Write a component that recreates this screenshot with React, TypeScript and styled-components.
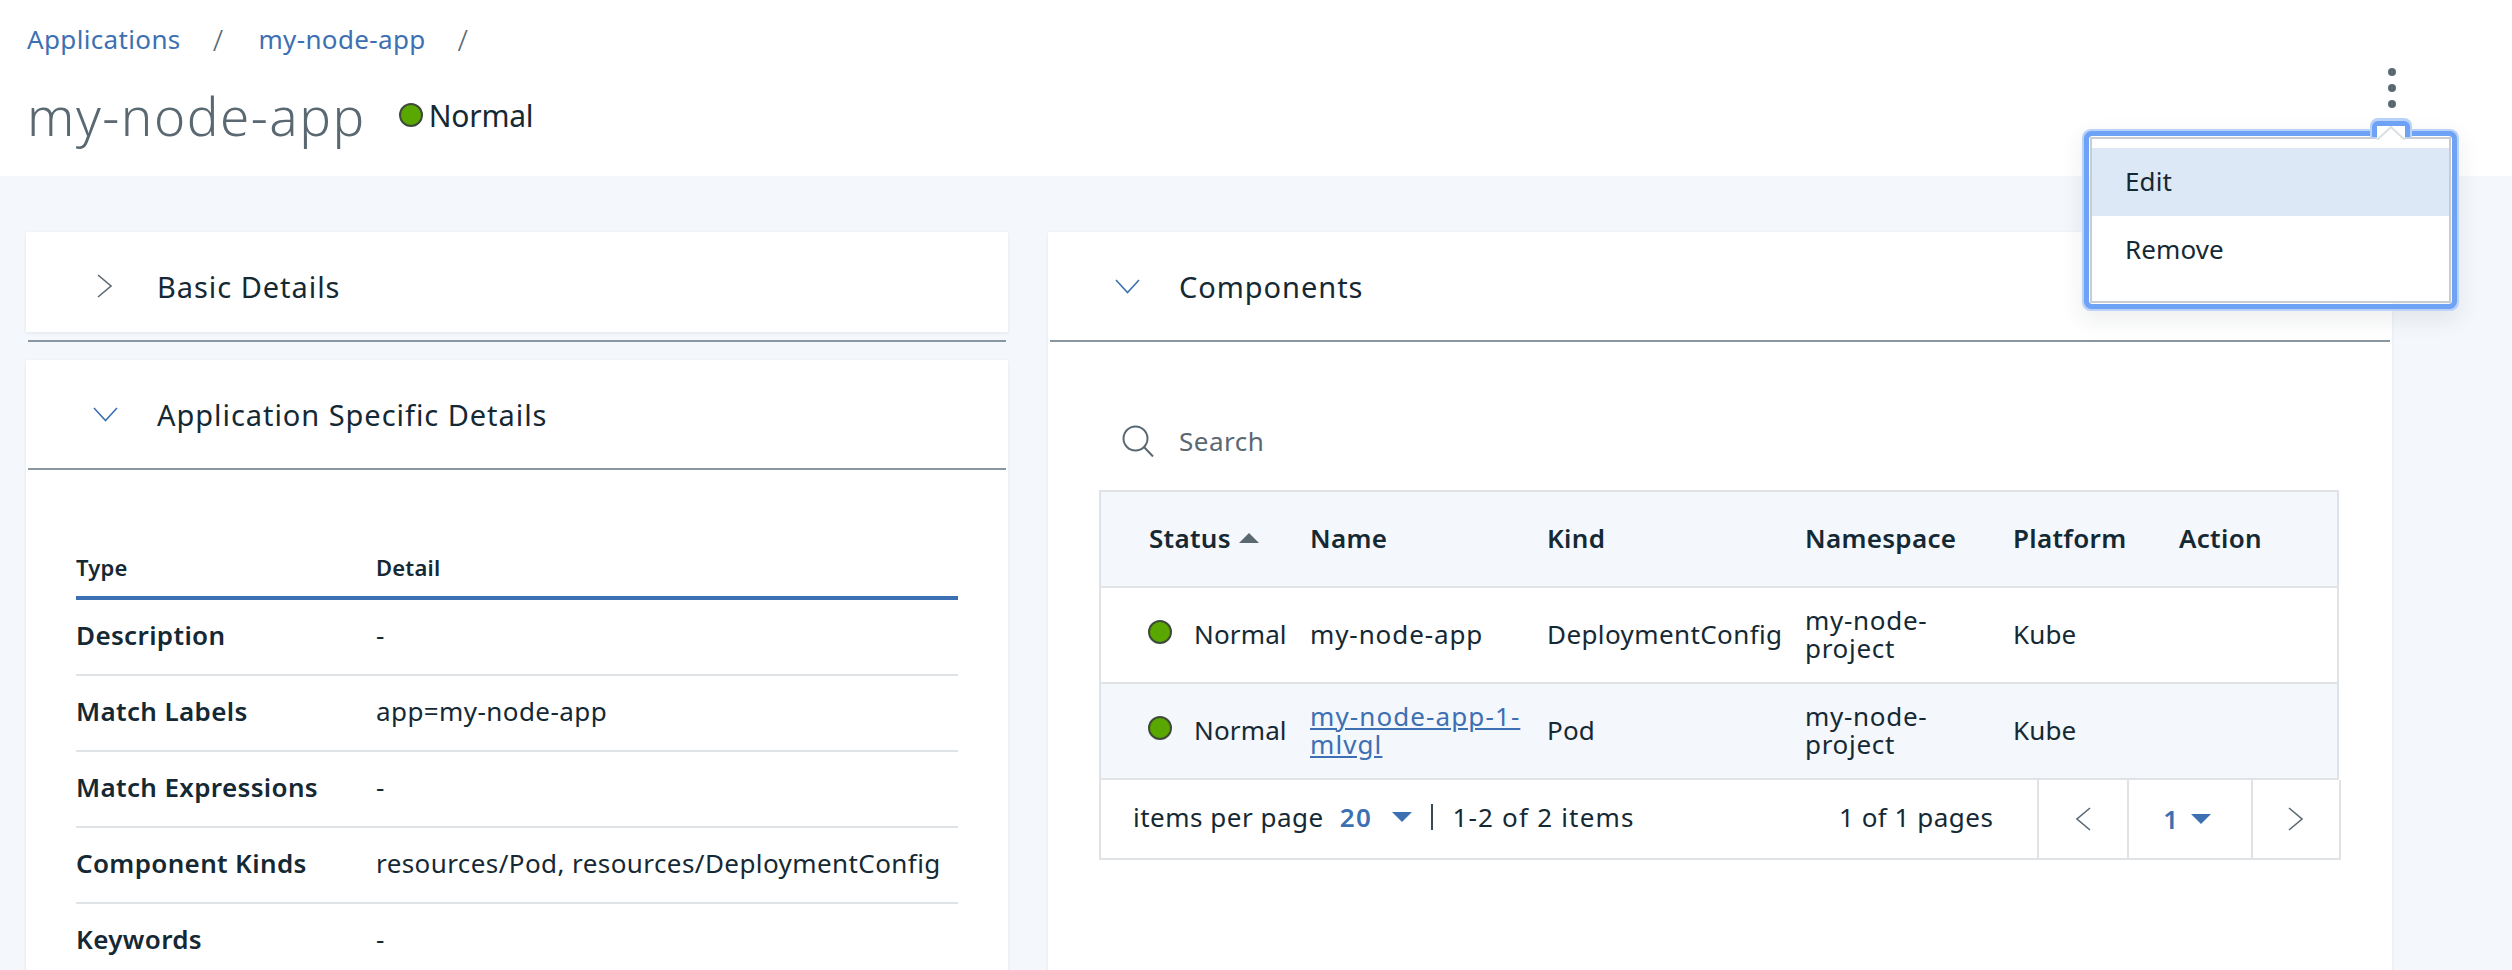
import React from "react";
import styled, { createGlobalStyle } from "styled-components";

const Global = createGlobalStyle`
  html, body { margin: 0; padding: 0; background: #f4f7fb; height: 970px; overflow: hidden; }
  body { font-family: "Noto Sans", "Open Sans", sans-serif; color: #152934; }
  * { box-sizing: border-box; }
`;

const Page = styled.div`
  position: relative;
  width: 2512px;
  height: 970px;
  overflow: hidden;
`;
const TopBar = styled.header`
  height: 176px;
  background: #fff;
  padding: 20px 28px 0 27px;
`;
const Crumbs = styled.nav`
  display: flex;
  align-items: center;
  height: 38px;
  font-size: 26px;
  letter-spacing: 0.35px;
`;
const CrumbLink = styled.a`
  color: #3d70b2;
`;
const Slash = styled.span`
  color: #5a6872;
  font-size: 30px;
  font-weight: 300;
  margin: 0 35px 0 32px;
`;
const TitleRow = styled.div`
  display: flex;
  align-items: center;
  margin-top: 15px;
  height: 84px;
`;
const Title = styled.h1`
  margin: 0 33px 0 0;
  font-size: 53px;
  font-weight: 300;
  color: #5a6872;
  letter-spacing: 1.5px;
`;
const Dot = styled.span`
  display: inline-block;
  flex: none;
  width: 24px;
  height: 24px;
  border-radius: 50%;
  background: #5aa700;
  border: 2px solid #3e4b3a;
`;
const TitleStatus = styled.span`
  font-size: 30px;
  margin-left: 6px;
  letter-spacing: -0.2px;
`;
const KebabButton = styled.div`
  position: absolute;
  left: 2388px;
  top: 68px;
  display: flex;
  flex-direction: column;
  gap: 8px;
`;
const KebabDot = styled.span`
  width: 8px;
  height: 8px;
  border-radius: 50%;
  background: #5a6872;
`;
const Main = styled.main`
  display: flex;
  align-items: flex-start;
  gap: 40px;
  padding: 56px 0 0 26px;
`;
const LeftColumn = styled.div`
  width: 982px;
  display: flex;
  flex-direction: column;
`;
const RightColumn = styled.section`
  width: 1344px;
  height: 760px;
  background: #fff;
  box-shadow: 0 1px 3px rgba(21, 41, 52, 0.08);
`;
const Card = styled.section`
  background: #fff;
  box-shadow: 0 1px 3px rgba(21, 41, 52, 0.08);
`;
const PanelHead = styled.div<{ $h: number; $nudge?: number }>`
  display: flex;
  align-items: center;
  gap: 39px;
  height: ${(p) => p.$h}px;
  padding-left: 66px;
  padding-top: ${(p) => p.$nudge ?? 0}px;
`;
const PanelTitle = styled.h2`
  margin: 0;
  font-size: 29px;
  font-weight: 400;
  letter-spacing: 0.95px;
`;
const IconSlot = styled.span`
  display: flex;
  justify-content: center;
  width: 26px;
`;
const Rule = styled.div`
  height: 2px;
  margin: 0 2px;
  background: #8897a2;
`;
const CollapsedGap = styled.div`
  height: 8px;
`;
const Spacer = styled.div`
  height: 18px;
`;
const DetailBody = styled.div`
  padding: 76px 50px 0;
`;
const DetailHead = styled.div`
  display: grid;
  grid-template-columns: 300px 1fr;
  align-items: center;
  height: 54px;
  padding-bottom: 8px;
  font-size: 22px;
  font-weight: 600;
  letter-spacing: 0.2px;
  border-bottom: 4px solid #3d70b2;
`;
const DetailRow = styled.div`
  display: grid;
  grid-template-columns: 300px 1fr;
  align-items: center;
  height: 76px;
  padding-bottom: 4px;
  font-size: 26px;
  letter-spacing: 0.42px;
  border-bottom: 2px solid #dfe3e6;
`;
const DetailKey = styled.span`
  font-weight: 600;
  letter-spacing: 0.35px;
`;
const SearchBar = styled.div`
  display: flex;
  align-items: center;
  height: 32px;
  margin: 83px 0 33px 74px;
  font-size: 26px;
  color: #5a6872;
  letter-spacing: 0.5px;
  gap: 25px;
`;
const TableWrap = styled.div`
  width: 1240px;
  margin-left: 51px;
  border: 2px solid #dfe3e6;
  border-right: none;
  border-bottom: none;
  position: relative;
`;
const GridRow = styled.div<{ $shade?: boolean; $h: number; $head?: boolean }>`
  display: grid;
  grid-template-columns: 185px 237px 258px 208px 166px 180px;
  align-items: center;
  width: 1238px;
  height: ${(p) => p.$h}px;
  padding-bottom: 3px;
  background: ${(p) => (p.$shade ? "#f4f7fb" : "#fff")};
  border-bottom: 2px solid #dfe3e6;
  border-right: 2px solid #dfe3e6;
  font-size: 26px;
  font-weight: ${(p) => (p.$head ? 600 : 400)};
  letter-spacing: ${(p) => (p.$head ? 0.3 : 0.15)}px;
  line-height: 28px;
`;
const Cell = styled.div`
  padding-left: 24px;
`;
const Spread = styled.span<{ $ls: number }>`
  letter-spacing: ${(p) => p.$ls}px;
`;
const StatusCell = styled.div`
  display: flex;
  align-items: center;
  padding-left: 47px;
  gap: 22px;
  white-space: nowrap;
`;
const RaisedDot = styled(Dot)`
  position: relative;
  top: -2px;
`;
const SortCell = styled.div`
  display: flex;
  align-items: center;
  padding-left: 48px;
  gap: 8px;
`;
const NameLink = styled.a`
  color: #3d70b2;
  text-decoration: underline;
  letter-spacing: 1.1px;
`;
const Footer = styled.div`
  display: flex;
  align-items: center;
  height: 80px;
  width: 1240px;
  background: #fff;
  border-bottom: 2px solid #dfe3e6;
  font-size: 26px;
  letter-spacing: 0.5px;
`;
const FooterLeft = styled.div`
  display: flex;
  align-items: center;
  padding: 0 0 4px 32px;
  width: 738px;
`;
const BluePick = styled.span`
  color: #3d70b2;
  font-weight: 600;
`;
const PerPagePick = styled(BluePick)`
  margin: 0 20px 0 16px;
  letter-spacing: 1.5px;
`;
const Sep = styled.span`
  margin: 0 19px 0 19px;
  width: 2px;
  height: 26px;
  background: #3a4a54;
`;
const PagesLabel = styled.div`
  width: 198px;
  padding-bottom: 4px;
`;
const PageBox = styled.div<{ $w: number; $shift?: number }>`
  display: flex;
  align-items: center;
  justify-content: center;
  gap: 12px;
  width: ${(p) => p.$w}px;
  height: 78px;
  padding-right: ${(p) => p.$shift ?? 0}px;
  border-left: 2px solid #dfe3e6;
  &:last-child { border-right: 2px solid #dfe3e6; }
`;
const Popup = styled.div`
  position: absolute;
  left: 2092px;
  top: 139px;
  width: 357px;
  height: 162px;
  background: #fff;
  padding-top: 9px;
  font-size: 26px;
  box-shadow: 0 0 0 2px #c9cdd1;
  &::before {
    content: "";
    position: absolute;
    inset: -3px;
    border-radius: 3px;
    box-shadow: 0 0 0 5px #6ea2f5, 0 0 0 7px #b9d2fa, 0 8px 22px 8px rgba(21, 41, 52, 0.08);
    pointer-events: none;
  }
`;
const Notch = styled.div`
  position: absolute;
  left: 280px;
  top: -18px;
  width: 38px;
  height: 16px;
  background: #fff;
  border: 5px solid #6ea2f5;
  border-bottom: none;
  border-radius: 6px 6px 0 0;
  box-shadow: 0 -1px 0 2px #b9d2fa;
`;
const NotchArrow = styled.svg`
  position: absolute;
  left: 0;
  top: 0;
  background: #fff;
`;
const MenuItem = styled.div<{ $active?: boolean }>`
  display: flex;
  align-items: center;
  height: 68px;
  padding: 0 0 2px 33px;
  letter-spacing: 0.1px;
  background: ${(p) => (p.$active ? "#dde8f6" : "transparent")};
`;
const Tri = styled.svg`
  display: block;
  flex: none;
`;

const ChevronRight = () => (
  <svg width="16" height="24" viewBox="0 0 16 24" fill="none">
    <path d="M1 1l13 11L1 23" stroke="#5a6872" strokeWidth="1.6" />
  </svg>
);
const ChevronLeft = () => (
  <svg width="16" height="24" viewBox="0 0 16 24" fill="none">
    <path d="M15 1L2 12l13 11" stroke="#5a6872" strokeWidth="1.6" />
  </svg>
);
const ChevronDown = () => (
  <svg width="25" height="15" viewBox="0 0 25 15" fill="none">
    <path d="M1 1l11.5 12.5L24 1" stroke="#3d70b2" strokeWidth="1.6" />
  </svg>
);
const SearchIcon = () => (
  <svg width="32" height="32" viewBox="0 0 32 32" fill="none">
    <circle cx="13.5" cy="13.5" r="12" stroke="#5a6872" strokeWidth="2" />
    <path d="M22 22l9 9.5" stroke="#5a6872" strokeWidth="2" />
  </svg>
);
const Caret = ({ up, color }: { up?: boolean; color: string }) => (
  <Tri width="20" height="10" viewBox="0 0 20 10">
    <path d={up ? "M10 0l10 10H0z" : "M0 0h20L10 10z"} fill={color} />
  </Tri>
);

const details: [string, string][] = [
  ["Description", "-"],
  ["Match Labels", "app=my-node-app"],
  ["Match Expressions", "-"],
  ["Component Kinds", "resources/Pod, resources/DeploymentConfig"],
  ["Keywords", "-"],
];

export default function App() {
  return (
    <Page>
      <Global />
      <TopBar>
        <Crumbs>
          <CrumbLink>Applications</CrumbLink>
          <Slash>/</Slash>
          <CrumbLink>my-node-app</CrumbLink>
          <Slash>/</Slash>
        </Crumbs>
        <TitleRow>
          <Title>my-node-app</Title>
          <Dot />
          <TitleStatus>Normal</TitleStatus>
        </TitleRow>
      </TopBar>
      <KebabButton>
        <KebabDot />
        <KebabDot />
        <KebabDot />
      </KebabButton>
      <Main>
        <LeftColumn>
          <Card>
            <PanelHead $h={100} $nudge={8}>
              <IconSlot><ChevronRight /></IconSlot>
              <PanelTitle>Basic Details</PanelTitle>
            </PanelHead>
          </Card>
          <CollapsedGap />
          <Rule />
          <Spacer />
          <Card>
            <PanelHead $h={108}>
              <IconSlot><ChevronDown /></IconSlot>
              <PanelTitle>Application Specific Details</PanelTitle>
            </PanelHead>
            <Rule />
            <DetailBody>
              <DetailHead>
                <span>Type</span>
                <span>Detail</span>
              </DetailHead>
              {details.map(([k, v]) => (
                <DetailRow key={k}>
                  <DetailKey>{k}</DetailKey>
                  <span>{v}</span>
                </DetailRow>
              ))}
            </DetailBody>
          </Card>
        </LeftColumn>
        <RightColumn>
          <PanelHead $h={108}>
            <IconSlot><ChevronDown /></IconSlot>
            <PanelTitle>Components</PanelTitle>
          </PanelHead>
          <Rule />
          <SearchBar>
            <SearchIcon />
            <span>Search</span>
          </SearchBar>
          <TableWrap>
            <GridRow $h={96} $shade $head>
              <SortCell>
                Status <Caret up color="#5a6872" />
              </SortCell>
              <Cell>Name</Cell>
              <Cell>Kind</Cell>
              <Cell>Namespace</Cell>
              <Cell>Platform</Cell>
              <Cell>Action</Cell>
            </GridRow>
            <GridRow $h={96}>
              <StatusCell><RaisedDot />Normal</StatusCell>
              <Cell><Spread $ls={0.9}>my-node-app</Spread></Cell>
              <Cell><Spread $ls={0.4}>DeploymentConfig</Spread></Cell>
              <Cell><Spread $ls={0.7}>my-node-project</Spread></Cell>
              <Cell>Kube</Cell>
              <Cell />
            </GridRow>
            <GridRow $h={96} $shade>
              <StatusCell><RaisedDot />Normal</StatusCell>
              <Cell><NameLink>my-node-app-1-mlvgl</NameLink></Cell>
              <Cell>Pod</Cell>
              <Cell><Spread $ls={0.7}>my-node-project</Spread></Cell>
              <Cell>Kube</Cell>
              <Cell />
            </GridRow>
            <Footer>
              <FooterLeft>
                items per page
                <PerPagePick>20</PerPagePick>
                <Caret color="#3d70b2" />
                <Sep />
                <Spread $ls={1.2}>1-2 of 2 items</Spread>
              </FooterLeft>
              <PagesLabel>1 of 1 pages</PagesLabel>
              <PageBox $w={90}><ChevronLeft /></PageBox>
              <PageBox $w={124} $shift={6}>
                <BluePick>1</BluePick>
                <Caret color="#3d70b2" />
              </PageBox>
              <PageBox $w={90}><ChevronRight /></PageBox>
            </Footer>
          </TableWrap>
        </RightColumn>
      </Main>
      <Popup>
        <Notch>
          <NotchArrow width="28" height="14" viewBox="0 0 28 14">
            <path d="M0 14L14 1l14 13" fill="none" stroke="#dcdfe2" strokeWidth="2" />
          </NotchArrow>
        </Notch>
        <MenuItem $active>Edit</MenuItem>
        <MenuItem>Remove</MenuItem>
      </Popup>
    </Page>
  );
}
